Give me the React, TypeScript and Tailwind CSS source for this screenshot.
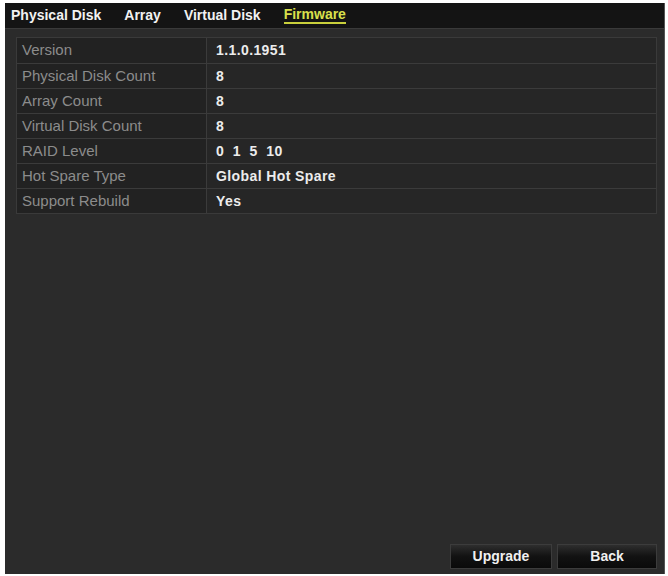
import React from "react";

const rows: [string, string][] = [
  ["Version", "1.1.0.1951"],
  ["Physical Disk Count", "8"],
  ["Array Count", "8"],
  ["Virtual Disk Count", "8"],
  ["RAID Level", "0  1  5  10"],
  ["Hot Spare Type", "Global Hot Spare"],
  ["Support Rebuild", "Yes"],
];

export default function App() {
  return (
    <div className="w-[668px] h-[576px] bg-white pt-[3px] pl-[5px]" style={{ fontFamily: '"Liberation Sans", Arial, sans-serif' }}>
      <div className="w-[660px] h-[571px] bg-[#2b2b2b] flex flex-col border-r border-[#555]">
        <div className="h-[26px] bg-[#141414] flex items-center gap-[23px] pl-[6px] border-b border-[#3a3a3a]">
          <span className="text-[14px] font-bold text-[#f2f2f2]">Physical Disk</span>
          <span className="text-[14px] font-bold text-[#f2f2f2]">Array</span>
          <span className="text-[14px] font-bold text-[#f2f2f2]">Virtual Disk</span>
          <span className="text-[14px] font-bold text-[#d9e04c] border-b-2 border-[#c9d03c] leading-[15px]">Firmware</span>
        </div>
        <div className="flex-1 flex flex-col pl-[11px] pr-[7px] pt-[8px] pb-[5px]">
          <div className="w-full border border-[#3a3a3a] bg-[#242424]">
            {rows.map(([k, v], i) => (
              <div key={k} className={`flex h-[25px] ${i > 0 ? "border-t border-[#3b3b3b]" : ""}`}>
                <div className="w-[190px] border-r border-[#3b3b3b] bg-[#222] flex items-center pl-[5px] text-[15px] text-[#8c8c8c]">{k}</div>
                <div className="flex-1 flex items-center pl-[9px] text-[14px] tracking-[0.4px] font-bold text-[#ececec] whitespace-pre bg-[#262626]">{v}</div>
              </div>
            ))}
          </div>
          <div className="flex-1" />
          <div className="flex justify-end gap-[5px]">
            <button className="w-[102px] h-[25px] bg-gradient-to-b from-[#2e2e2e] via-[#121212] to-[#0a0a0a] border border-[#3c3c3c] text-[14px] font-bold text-[#f0f0f0]">Upgrade</button>
            <button className="w-[100px] h-[25px] bg-gradient-to-b from-[#2e2e2e] via-[#121212] to-[#0a0a0a] border border-[#3c3c3c] text-[14px] font-bold text-[#f0f0f0]">Back</button>
          </div>
        </div>
      </div>
    </div>
  );
}
